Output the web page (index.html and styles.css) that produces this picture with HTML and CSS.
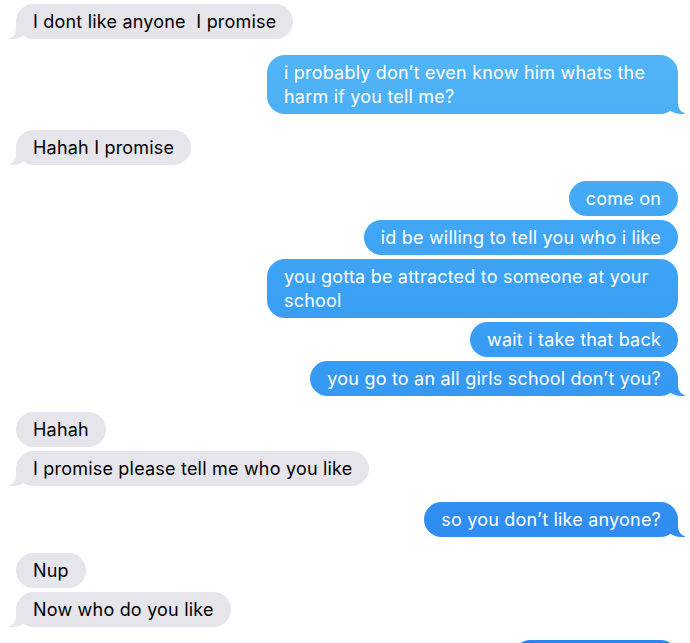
FILE: index.html
```
<!DOCTYPE html>
<html>
	<head>
		<meta charset="UTF-8">
		<title>Messages</title>
		<link rel="stylesheet" href="styles.css">
	</head>
	<body>
		<section class="thread">
			<div class="group">
				<p class="msg in tail">I dont like anyone&nbsp; I promise</p>
			</div>
			<div class="group">
				<p class="msg out tail">i probably don’t even know him whats the harm if you tell me?</p>
			</div>
			<div class="group">
				<p class="msg in tail">Hahah I promise</p>
			</div>
			<div class="group">
				<p class="msg out">come on</p>
				<p class="msg out">id be willing to tell you who i like</p>
				<p class="msg out">you gotta be attracted to someone at your school</p>
				<p class="msg out">wait i take that back</p>
				<p class="msg out tail">you go to an all girls school don’t you?</p>
			</div>
			<div class="group">
				<p class="msg in">Hahah</p>
				<p class="msg in tail">I promise please tell me who you like</p>
			</div>
			<div class="group">
				<p class="msg out tail">so you don’t like anyone?</p>
			</div>
			<div class="group">
				<p class="msg in">Nup</p>
				<p class="msg in tail">Now who do you like</p>
			</div>
			<div class="group last">
				<p class="msg out cut"></p>
			</div>
		</section>
	</body>
</html>
```

FILE: styles.css
```
html, body {
	margin: 0;
	padding: 0;
	height: 100%;
	overflow: hidden;
	background: #fff;
}

.thread {
	display: flex;
	flex-direction: column;
	gap: 16px;
	padding: 4px 12px 0 16px;
	font-family: "Inter", "Roboto", sans-serif;
	font-size: 18px;
}

.group {
	display: flex;
	flex-direction: column;
	gap: 4px;
}

.group.last {
	margin-top: -3px;
}

.msg {
	position: relative;
	margin: 0;
	max-width: 377px;
	padding: 5.5px 17px;
	line-height: 24px;
	border-radius: 18px;
	letter-spacing: 0.2px;
}

.in {
	align-self: flex-start;
	background: #e6e5eb;
	color: #000;
}

.out {
	align-self: flex-end;
	color: #fff;
	background: linear-gradient(to bottom, #56b9f8 0, #3aa0f4 300px, #2a83ef 643px) fixed;
}

.cut {
	width: 131px;
	height: 24px;
}

/* tails */
.tail::before,
.tail::after {
	content: "";
	position: absolute;
	bottom: 0;
	height: 20px;
}

.out.tail::before {
	right: -7px;
	width: 20px;
	background: linear-gradient(to bottom, #56b9f8 0, #3aa0f4 300px, #2a83ef 643px) fixed;
	border-bottom-left-radius: 16px 14px;
}

.out.tail::after {
	right: -26px;
	width: 26px;
	background: #fff;
	border-bottom-left-radius: 10px;
}

.in.tail::before {
	left: -7px;
	width: 20px;
	background: #e6e5eb;
	border-bottom-right-radius: 16px 14px;
}

.in.tail::after {
	left: -26px;
	width: 26px;
	background: #fff;
	border-bottom-right-radius: 10px;
}
```
